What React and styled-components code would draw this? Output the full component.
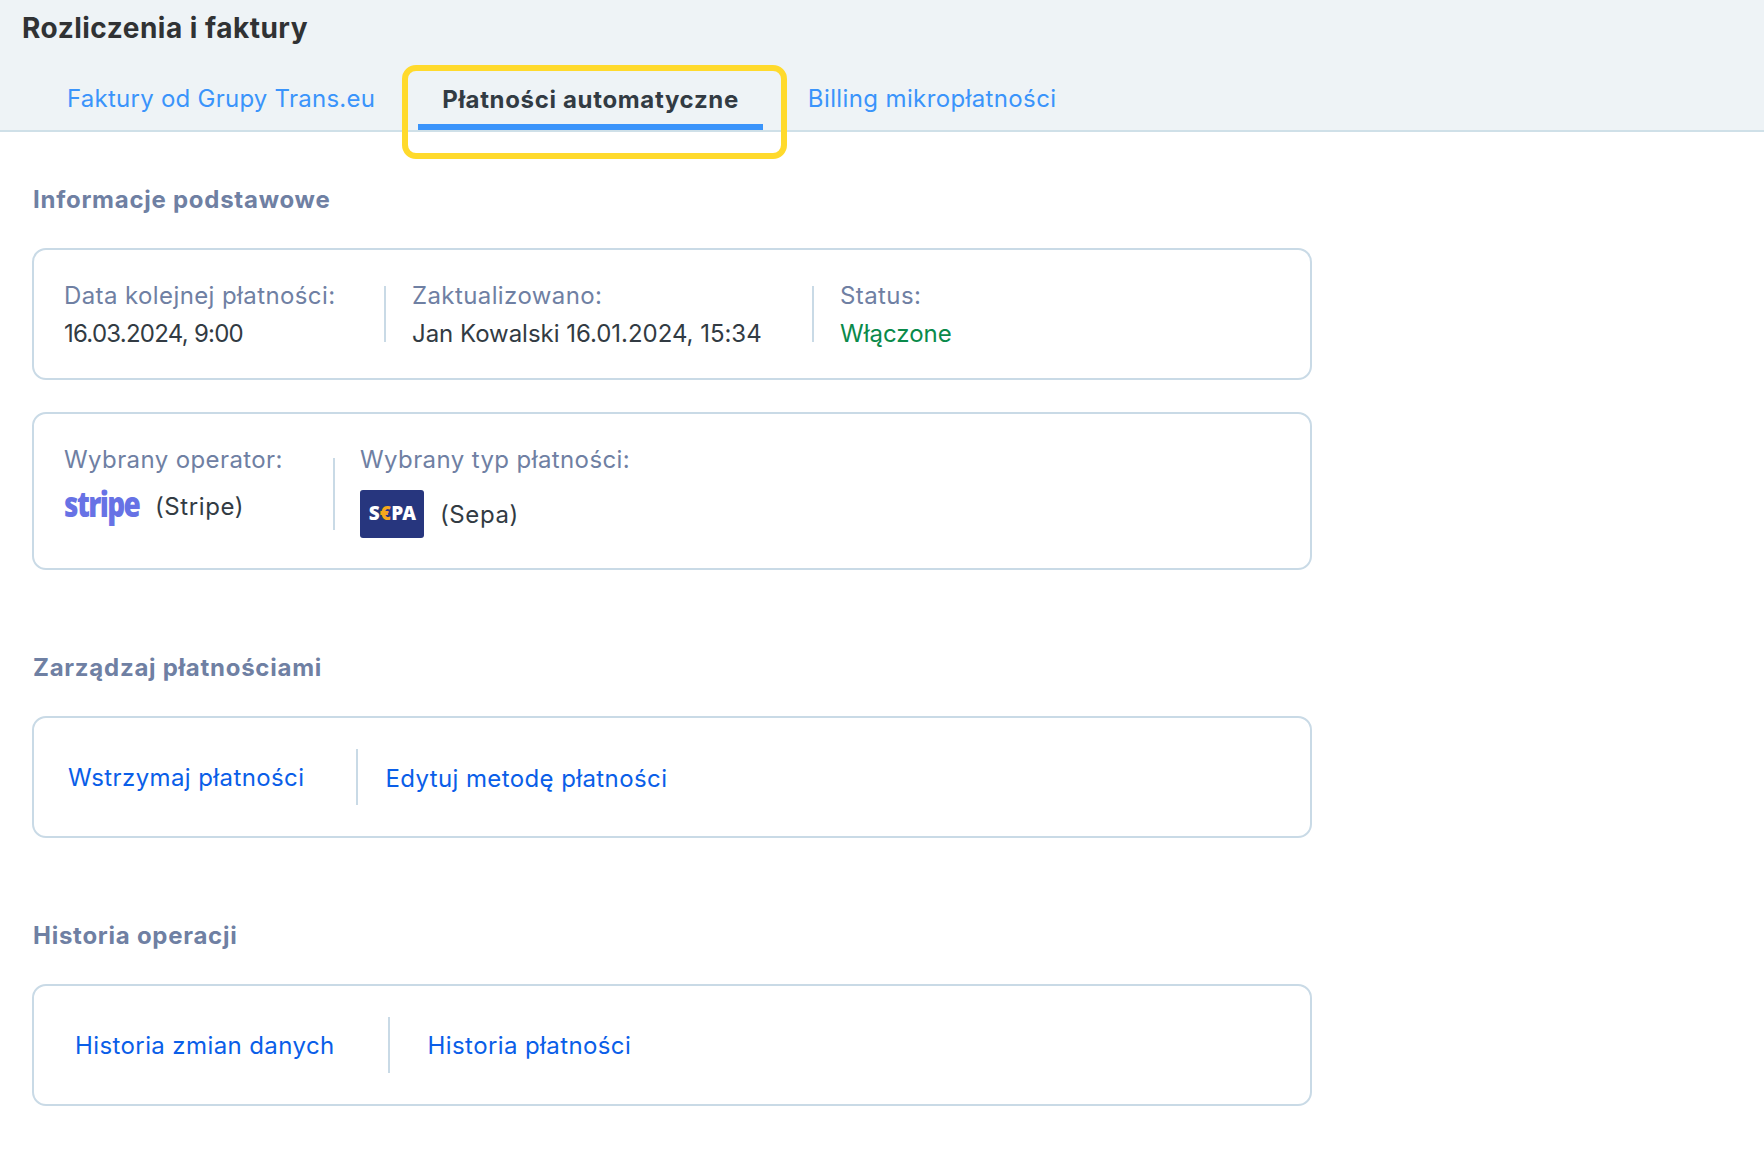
import React from "react";
import styled, { createGlobalStyle } from "styled-components";

const Global = createGlobalStyle`
  html, body { margin: 0; padding: 0; background: #fff; }
  body { font-family: "Inter", "Noto Sans", sans-serif; color: #323b43; }
`;

const Page = styled.div`
  width: 1764px;
  height: 1158px;
  overflow: hidden;
  background: #fff;
`;
const Header = styled.header`
  box-sizing: border-box;
  height: 132px;
  background: #eef3f6;
  border-bottom: 2px solid #cfe0e8;
  display: flex;
  flex-direction: column;
  padding-top: 12px;
`;
const Title = styled.h1`
  margin: 0 0 0 22px;
  font-size: 28px;
  line-height: 32px;
  font-weight: 700;
  letter-spacing: 0.5px;
  color: #303234;
`;
const Tabs = styled.nav`
  display: flex;
  margin-top: 40px;
  padding-left: 67px;
  height: 46px;
`;
const Tab = styled.a`
  position: relative;
  font-size: 24px;
  line-height: 30px;
  white-space: nowrap;
  letter-spacing: ${(p) => p.$ls}px;
  color: #3a94fb;
  margin-right: ${(p) => p.$mr || 0}px;
  ${(p) =>
    p.$active &&
    `
    color: #323b43;
    font-weight: 700;
    letter-spacing: 0.66px;
    padding: 1px 24px 0;
  `}
`;
const Underline = styled.span`
  position: absolute;
  left: 0;
  right: 0;
  top: 40px;
  height: 6px;
  background: #3a94fb;
`;
const Highlight = styled.span`
  position: absolute;
  left: -16px;
  right: -24px;
  top: -19px;
  height: 94px;
  box-sizing: border-box;
  border: 6px solid #ffda2c;
  border-radius: 14px;
`;
const Content = styled.main`
  width: 1280px;
  margin-left: 32px;
  display: flex;
  flex-direction: column;
`;
const Heading = styled.h2`
  margin: ${(p) => p.$top}px 0 33px;
  padding-left: 1px;
  font-size: 24px;
  line-height: 30px;
  font-weight: 700;
  letter-spacing: 0.74px;
  color: #6f80a3;
`;
const Card = styled.section`
  box-sizing: border-box;
  height: ${(p) => p.$h}px;
  margin-bottom: ${(p) => p.$mb || 0}px;
  border: 2px solid #c9dae6;
  border-radius: 14px;
  display: flex;
  align-items: ${(p) => (p.$top ? "flex-start" : "center")};
  padding-left: ${(p) => p.$pl || 0}px;
  padding-top: ${(p) => p.$top || 0}px;
`;
const Field = styled.div`
  display: flex;
  flex-direction: column;
  width: ${(p) => p.$w}px;
  flex: none;
  gap: ${(p) => p.$gap || 8}px;
  margin-top: ${(p) => p.$mt || 0}px;
`;
const Label = styled.div`
  font-size: 24px;
  line-height: 30px;
  letter-spacing: 0.4px;
  color: #6f80a3;
  white-space: nowrap;
`;
const Value = styled.div`
  font-size: 24px;
  line-height: 30px;
  white-space: nowrap;
  letter-spacing: ${(p) => p.$ls || 0}px;
  margin-top: ${(p) => p.$mt || 0}px;
  color: ${(p) => p.$color || "#323b43"};
`;
const Divider = styled.div`
  width: 2px;
  height: ${(p) => p.$h}px;
  background: #c9dae6;
  flex: none;
  margin: ${(p) => `${p.$t || 0}px ${p.$r}px 0 ${p.$l}px`};
`;
const Brand = styled.div`
  display: flex;
  align-items: center;
  height: ${(p) => p.$h}px;
`;
const StripeLogo = styled.span`
  display: inline-block;
  width: 77px;
  font-family: "Open Sans", sans-serif;
  font-weight: 800;
  font-size: 35px;
  line-height: 30px;
  letter-spacing: -2px;
  color: #6772e5;
  margin-right: 14px;
  margin-top: -6px;
  transform: scaleX(0.8);
  transform-origin: left center;
`;
const SepaLogo = styled.span`
  width: 64px;
  height: 48px;
  flex: none;
  border-radius: 3px;
  background: #27367e;
  color: #fff;
  display: flex;
  align-items: center;
  justify-content: center;
  font-family: "Open Sans", sans-serif;
  font-weight: 800;
  font-size: 19px;
  letter-spacing: -0.8px;
  margin-right: 16px;
  padding-bottom: 2px;
  box-sizing: border-box;
`;
const Euro = styled.span`
  color: #f5a71c;
  margin: 0 1px;
`;
const Link = styled.a`
  font-size: 24px;
  line-height: 30px;
  letter-spacing: 0.4px;
  color: #0a5ee8;
  white-space: nowrap;
  margin-top: ${(p) => p.$mt || 0}px;
`;

export default function App() {
  return (
    <Page>
      <Global />
      <Header>
        <Title>Rozliczenia i faktury</Title>
        <Tabs>
          <Tab $ls={0.25} $mr={43}>Faktury od Grupy Trans.eu</Tab>
          <Tab $active $mr={45}>
            Płatności automatyczne
            <Underline />
            <Highlight />
          </Tab>
          <Tab $ls={0.38}>Billing mikropłatności</Tab>
        </Tabs>
      </Header>
      <Content>
        <Heading $top={53}>Informacje podstawowe</Heading>
        <Card $h={132} $mb={32} $pl={30}>
          <Field $w={320} $mt={2}>
            <Label>Data kolejnej płatności:</Label>
            <Value $ls={-0.75}>16.03.2024, 9:00</Value>
          </Field>
          <Divider $h={56} $l={0} $r={26} />
          <Field $w={400} $mt={2}>
            <Label>Zaktualizowano:</Label>
            <Value $ls={-0.03}>Jan Kowalski 16.01.2024, 15:34</Value>
          </Field>
          <Divider $h={56} $l={0} $r={26} />
          <Field $w={200} $mt={2}>
            <Label>Status:</Label>
            <Value $color="#0a8a4a">Włączone</Value>
          </Field>
        </Card>
        <Card $h={158} $pl={30} $top={31}>
          <Field $w={269} $gap={12}>
            <Label>Wybrany operator:</Label>
            <Brand $h={40}>
              <StripeLogo>stripe</StripeLogo>
              <Value $ls={0.6}>(Stripe)</Value>
            </Brand>
          </Field>
          <Divider $h={72} $t={13} $l={0} $r={25} />
          <Field $w={400} $gap={15}>
            <Label>Wybrany typ płatności:</Label>
            <Brand $h={48}>
              <SepaLogo>
                S<Euro>€</Euro>PA
              </SepaLogo>
              <Value $ls={0.6} $mt={2}>(Sepa)</Value>
            </Brand>
          </Field>
        </Card>
        <Heading $top={83}>Zarządzaj płatnościami</Heading>
        <Card $h={122} $pl={34}>
          <Link $mt={1}>Wstrzymaj płatności</Link>
          <Divider $h={56} $l={52} $r={27} />
          <Link $mt={3}>Edytuj metodę płatności</Link>
        </Card>
        <Heading $top={83}>Historia operacji</Heading>
        <Card $h={122} $pl={41}>
          <Link $mt={1}>Historia zmian danych</Link>
          <Divider $h={56} $l={53} $r={38} />
          <Link $mt={1}>Historia płatności</Link>
        </Card>
      </Content>
    </Page>
  );
}
